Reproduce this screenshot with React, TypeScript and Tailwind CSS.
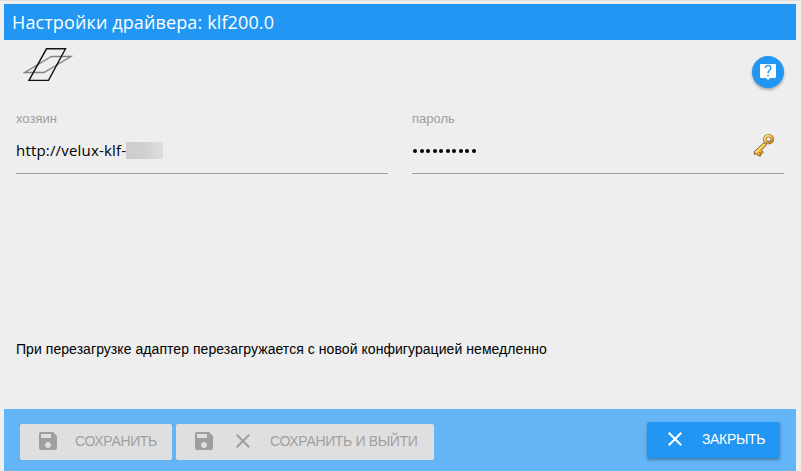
import React from "react";

function SaveIcon() {
  return (
    <svg viewBox="0 0 24 24" className="h-6 w-6 shrink-0 fill-current" aria-hidden="true">
      <path d="M17 3H5a2 2 0 0 0-2 2v14a2 2 0 0 0 2 2h14c1.1 0 2-.9 2-2V7l-4-4zm-5 16c-1.66 0-3-1.34-3-3s1.34-3 3-3 3 1.34 3 3-1.34 3-3 3zm3-10H5V5h10v4z" />
    </svg>
  );
}

function CloseIcon() {
  return (
    <svg viewBox="0 0 24 24" className="h-6 w-6 shrink-0 fill-current" aria-hidden="true">
      <path d="M19 6.41L17.59 5 12 10.59 6.41 5 5 6.41 10.59 12 5 17.59 6.41 19 12 13.41 17.59 19 19 17.59 13.41 12z" />
    </svg>
  );
}

function AdapterLogo() {
  return (
    <svg viewBox="0 0 50 36" className="h-9 w-[50px]" fill="none" aria-hidden="true">
      <path d="M1.5 24.5L28.5 8.5H48L21 24.5Z" stroke="#808080" strokeWidth="1.3" />
      <path d="M23.500 .8H42.500L25.500 32.400H6Z" stroke="#111" strokeWidth="1.400" />
    </svg>
  );
}

function HelpIcon() {
  return (
    <svg viewBox="0 0 18 18" className="h-[18px] w-[18px]" aria-hidden="true">
      <path
        d="M2 1h14a1 1 0 0 1 1 1v12a1 1 0 0 1-1 1H11l-2 2-2-2H2a1 1 0 0 1-1-1V2a1 1 0 0 1 1-1z"
        fill="#fff"
      />
      <path
        d="M6.200 5.200C6.200 3.500 7.400 2.400 9 2.400s2.800.9 2.800 2.500C11.800 7.100 9 7.400 9 10.200"
        fill="none"
        stroke="#2196f3"
        strokeWidth="1.400"
      />
      <rect x="8.200" y="11.800" width="1.600" height="1.400" fill="#2196f3" />
    </svg>
  );
}

function KeyIcon() {
  return (
    <svg viewBox="0 0 24 26" preserveAspectRatio="none" className="h-6 w-6" aria-hidden="true">
      <defs>
        <linearGradient id="keyGold" x1="0" y1="0" x2="1" y2="1">
          <stop offset="0" stopColor="#ffe680" />
          <stop offset=".55" stopColor="#efb93b" />
          <stop offset="1" stopColor="#b9781d" />
        </linearGradient>
      </defs>
      <path
        d="M12 10.400L2.200 20.300 2.400 23.200 4.300 22.700 7.100 25 8.700 24.800 8.900 23 7.500 21.300 9.500 22.400 11.300 20.900 9.300 18.600 14.600 12.700Z"
        fill="url(#keyGold)"
        stroke="#7b4523"
        strokeWidth=".9"
        strokeLinejoin="round"
      />
      <path d="M12.700 11.800L4 20.600" stroke="#ffe27a" strokeWidth="1.200" />
      <circle cx="16.500" cy="6.700" r="3.800" fill="none" stroke="#7b5a2b" strokeWidth="3.500" />
      <circle cx="16.500" cy="6.700" r="3.900" fill="none" stroke="url(#keyGold)" strokeWidth="2.300" />
      <circle cx="16.500" cy="6.700" r="1.900" fill="#e8e8e8" />
    </svg>
  );
}

export default function App() {
  return (
    <div className="flex h-[471px] w-[801px] flex-col overflow-hidden border-t border-[#dfdfdf] bg-[#eee] pt-[3px] pr-[5px] pl-1 font-['Liberation_Sans',sans-serif] text-black">
      <header className="flex h-9 shrink-0 items-center bg-[#2196f3] pl-2 text-white">
        <h1 className="font-['Open_Sans',sans-serif] text-[18px] leading-9 tracking-[0.12px] whitespace-nowrap">
          Настройки драйвера: klf200.0
        </h1>
      </header>

      <main className="flex flex-1 flex-col px-3">
        <div className="flex h-[68px] items-start justify-between pt-2">
          <div className="pl-[7px]">
            <AdapterLogo />
          </div>
          <button
            type="button"
            className="mt-2 flex h-8 w-8 items-center justify-center rounded-full bg-[#2196f3] shadow-[0_2px_3px_rgba(0,0,0,0.3)]"
            aria-label="?"
          >
            <HelpIcon />
          </button>
        </div>

        <div className="grid grid-cols-2 gap-6">
          <div className="h-[66px] border-b border-[#9e9e9e]">
            <div className="h-[22px] pt-[3px] text-[13px] leading-4 text-[#9e9e9e]">хозяин</div>
            <div className="flex h-10 items-center font-['Open_Sans',sans-serif] text-[15px] tracking-[0.18px]">
              <span className="whitespace-nowrap">http://velux-klf-</span>
              <span className="h-[17px] w-[37px] bg-linear-to-r from-[#cdcdcd] via-[#d0d0d0] to-[#dedede]" />
            </div>
          </div>
          <div className="h-[66px] border-b border-[#9e9e9e]">
            <div className="h-[22px] pt-[3px] text-[13px] leading-4 text-[#9e9e9e]">пароль</div>
            <div className="flex h-10 items-center justify-between pr-2">
              <div className="flex gap-[2.5px] pt-[2px] pl-[1px]">
                {Array.from({ length: 10 }, (_, i) => (
                  <span key={i} className="h-1 w-1 rounded-full bg-black" />
                ))}
              </div>
              <div className="pb-[10px]">
                <KeyIcon />
              </div>
            </div>
          </div>
        </div>

        <p className="mt-[167px] text-[14px] leading-4 tracking-[0.057px] whitespace-nowrap">
          При перезагрузке адаптер перезагружается с новой конфигурацией немедленно
        </p>
      </main>

      <footer className="flex h-[62px] shrink-0 items-start bg-[#64b5f6] px-4 text-[14px] tracking-[-0.35px]">
        <div className="mt-[15px] flex gap-1 text-[#9f9f9f]">
          <button type="button" className="flex h-9 w-[152px] items-center rounded-[2px] bg-[#dfdfdf] pb-[2px] pl-4">
            <SaveIcon />
            <span className="ml-[15px] whitespace-nowrap">СОХРАНИТЬ</span>
          </button>
          <button type="button" className="flex h-9 w-[258px] items-center rounded-[2px] bg-[#dfdfdf] pb-[2px] pl-4">
            <SaveIcon />
            <span className="ml-[15px] flex">
              <CloseIcon />
            </span>
            <span className="ml-[15px] whitespace-nowrap">СОХРАНИТЬ И ВЫЙТИ</span>
          </button>
        </div>
        <button
          type="button"
          className="mt-[13px] ml-auto flex h-9 w-[133px] items-center rounded-[2px] bg-[#2196f3] pb-[2px] pl-4 text-white shadow-[0_2px_3px_rgba(0,0,0,0.3)]"
        >
          <CloseIcon />
          <span className="ml-[15px] whitespace-nowrap">ЗАКРЫТЬ</span>
        </button>
      </footer>
    </div>
  );
}
